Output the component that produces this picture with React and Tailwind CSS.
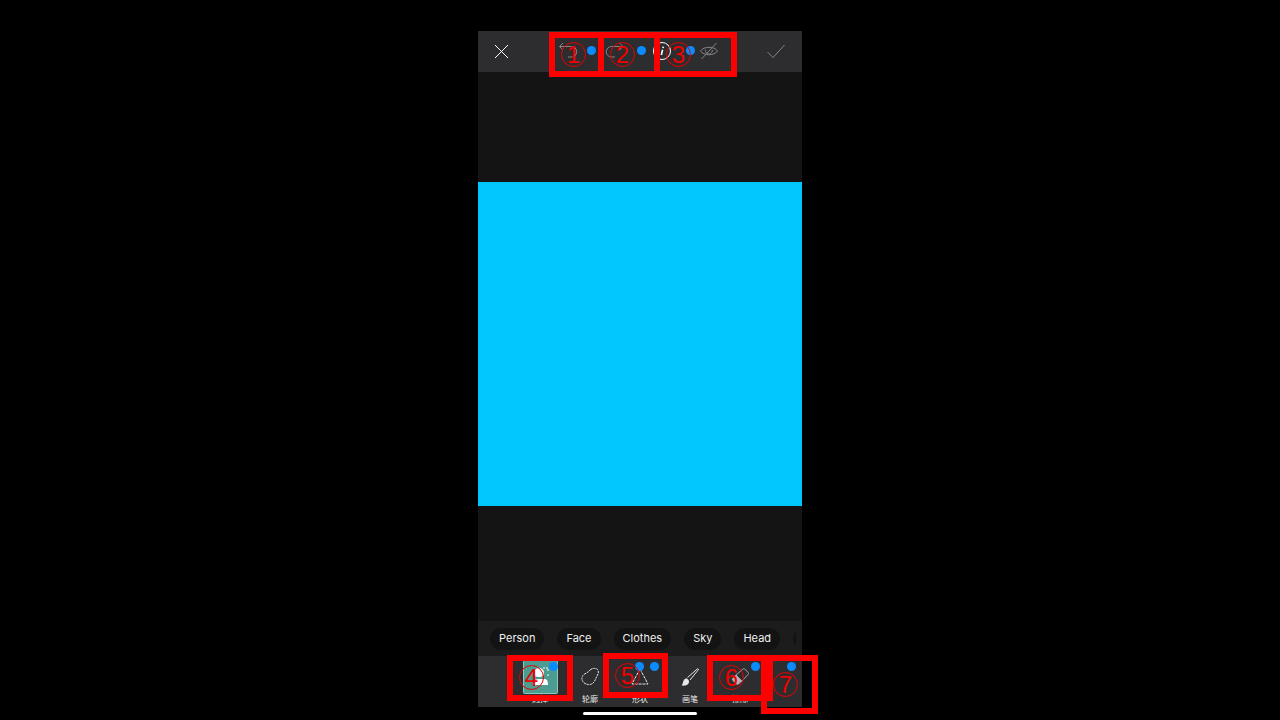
import React from "react";

const Callout = ({ n, className }) => (
  <div className={`pointer-events-none absolute z-10 flex items-start border-[6px] border-[#ff0000] pl-[6px] ${className}`}>
    <span className="flex size-[25px] shrink-0 items-center justify-center rounded-full border border-[#e80000] font-['Liberation_Sans',sans-serif] text-[24px] leading-[24px] text-[#f00000]">{n}</span>
  </div>
);
const Dot = ({ className }) => (
  <span className={`pointer-events-none absolute size-[9px] rounded-full bg-[#0a8cff] ${className}`} />
);
const Svg = ({ children }) => (
  <svg viewBox="0 0 20 20" fill="none" stroke="currentColor" strokeWidth="1" className="size-5" aria-hidden="true">{children}</svg>
);

const actions = [
  { label: "Undo", cls: "text-[#858587]", art: <><path d="M1.500 5.500h12a5 5 0 0 1 0 10.500H10" /><path d="M5 2 1.500 5.500 5 9" /></> },
  { label: "Redo", cls: "text-[#858587]", art: <><path d="M18 5.500H6.500a5 5 0 0 0 0 10.500H10" /><path d="M14.500 2 18 5.500 14.500 9" /></> },
  { label: "Info", cls: "text-white", art: <><circle cx="10" cy="10" r="8.500" /><path d="M10.600 8.700 9.300 14M11.200 5.700l-.2 1.500" strokeWidth="1.600" /></> },
  { label: "Compare", cls: "text-[#858587]", art: <><path d="M1.500 10c3.500-5 13.500-5 17 0-3.500 5-13.500 5-17 0Z" /><path d="M6.500 8.500c-.5 3 1.500 5 4 4.500 2-.3 3-2 2.800-4M2.500 18 17.500 2" /></> },
];

const tools = [
  { label: "选择", selected: true },
  { label: "轮廓", art: <path strokeDasharray="2.200 .8" d="M10.500 2.500c3-1.800 7-1.500 7.700 1.200.6 2.700-.7 4.300-1.700 6.300-1.500 3.500-3 8-8 7.500-5-.4-7-4-6.500-7C2.500 6.500 8 6.500 10.500 2.500Z" /> },
  { label: "形状", art: <path strokeDasharray="3 .9" d="M10 2 18 17H2Z" /> },
  { label: "画笔", art: <><path fill="currentColor" stroke="none" d="M1.500 18.500c2-1.500 1-5.500 4-7 1.500-.5 4 1.500 3.500 3.500-.5 3.500-4.500 4-7.500 3.500Z" /><path d="M7.500 10.500 17 2.200c1.200-.9 1.900-.1 1 1L10 13" /></> },
  { label: "擦除", art: <g stroke="#a4a4a6"><path d="m6 8 7-6c.7-.6 1.300-.4 1.800 0l3.400 3.600c.5.600.4 1.200-.1 1.800L12 14Z" /><path fill="#b4b4b6" d="M6 8 3 11c-.8.9-.8 1.600-.1 2.400l3.400 3.500c.7.600 1.500.5 2.200 0L12 14Z" /></g> },
];

const chips = ["Person", "Face", "Clothes", "Sky", "Head"];

export default function App() {
  return (
    <div className="flex min-h-screen justify-center bg-black pt-[31px]">
      <main className="flex w-81 max-w-full flex-col">
        <header className="relative flex h-[41px] shrink-0 items-center justify-between bg-[#2d2d2f] pb-px pl-[13px] pr-4">
          <button aria-label="Close" className="text-white"><Svg><path d="m4 4 13 13M17 4 4 17" /></Svg></button>
          <div className="flex gap-[27px]">
            {actions.map((a) => (
              <button key={a.label} aria-label={a.label} className={a.cls}><Svg>{a.art}</Svg></button>
            ))}
          </div>
          <button aria-label="Apply" className="text-[#858587]"><Svg><path d="m1.500 11 5.500 5.500L18.500 4" /></Svg></button>
          <Dot className="left-[109px] top-[15px]" />
          <Dot className="left-[159px] top-[15px]" />
          <Dot className="left-[208px] top-[15px]" />
          <Callout n="1" className="left-[71px] top-px h-[45px] w-[55px] pt-1" />
          <Callout n="2" className="left-[120px] top-px h-[45px] w-[62px] pt-1" />
          <Callout n="3" className="left-[176px] top-px h-[45px] w-[83px] pt-1" />
        </header>

        <section aria-label="Canvas" className="flex flex-1 flex-col justify-center bg-[#141414] pb-[5px]">
          <div className="aspect-square w-full bg-[#00c8ff]" />
        </section>

        <nav aria-label="Subjects" className="flex h-[35px] shrink-0 items-center bg-[#1c1c1c] pl-3 pr-[6px] font-[Inter,sans-serif] text-[11px] text-[#f0f0f0]">
          <div className="flex w-full gap-[13px] overflow-hidden">
            {chips.map((c) => (
              <button key={c} className="h-[22px] shrink-0 rounded-full bg-[#131313] px-[9px]">{c}</button>
            ))}
            <button aria-label="More" className="h-[22px] w-10 shrink-0 rounded-full bg-[#131313]" />
          </div>
        </nav>

        <footer className="relative flex h-[51px] shrink-0 bg-[#2d2d2f] pl-[37px]">
          {tools.map((t) => (
            <button key={t.label} className="flex w-[50px] flex-col items-center pt-1 font-['Noto_Sans_CJK_SC',sans-serif] text-[8px] leading-[10px] text-[#e8e8e8]">
              <span className="flex h-[34px] w-full items-center justify-center">
                {t.selected ? (
                  <svg viewBox="0 0 35 34" className="h-[34px] w-[35px]" aria-hidden="true">
                    <rect x=".5" y=".5" width="34" height="33" rx="1" fill="#4d9c91" stroke="#8cc8be" />
                    <path d="M11 13c0-6 9-7 10-1 0 4-2 5-5 5s-5-1-5-4Z" fill="#fff" />
                    <path d="M10 25c0-7 6-6 8-6h4c2 0 3 2 3 6Z" fill="#fff" />
                    <path d="M20 8h5v4M25 14v3" fill="none" stroke="#fff" strokeDasharray="2 1" />
                  </svg>
                ) : <Svg>{t.art}</Svg>}
              </span>
              <span>{t.label}</span>
            </button>
          ))}
          <Dot className="left-[71px] top-[6px]" />
          <Dot className="left-[157px] top-[6px]" />
          <Dot className="left-[172px] top-[6px]" />
          <Dot className="left-[273px] top-[6px]" />
          <Dot className="left-[309px] top-[6px]" />
          <Callout n="4" className="left-[29px] -top-px h-[46px] w-[66px] pt-1" />
          <Callout n="5" className="left-[125px] -top-[3px] h-[45px] w-[65px] pt-1" />
          <Callout n="6" className="left-[229px] -top-px h-[46px] w-[66px] pt-1" />
          <Callout n="7" className="left-[283px] -top-px h-[59px] w-[57px] pt-[11px]" />
        </footer>
        <div className="flex h-[13px] shrink-0 justify-center pt-[5px]">
          <span className="h-[3px] w-[114px] rounded-full bg-white" />
        </div>
      </main>
    </div>
  );
}
